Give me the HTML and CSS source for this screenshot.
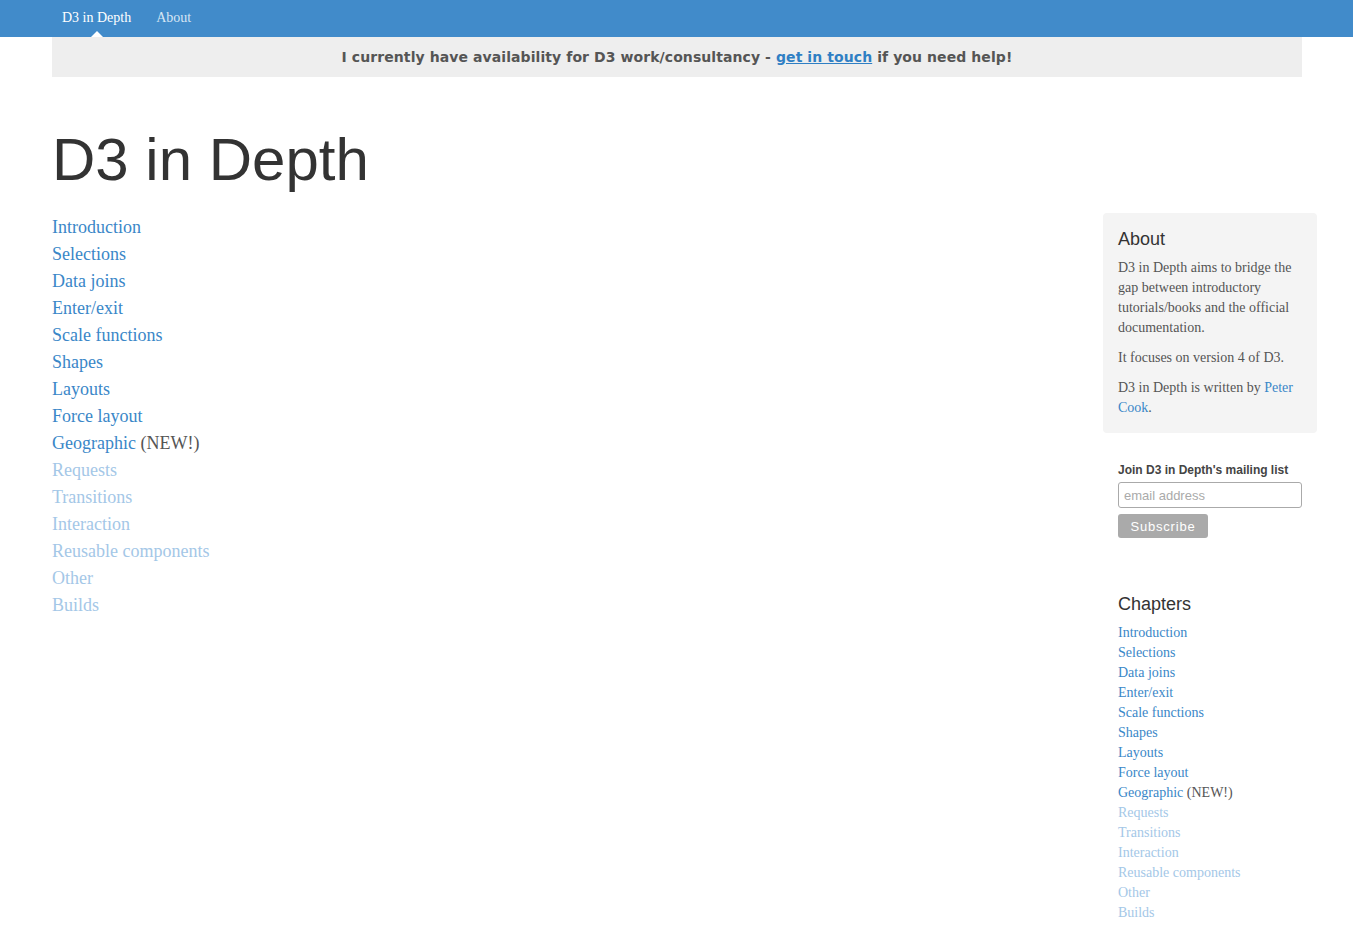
FILE: index.html
```html
<!DOCTYPE html>
<html>
<head>
<meta charset="utf-8">
<title>D3 in Depth</title>
<link rel="stylesheet" href="styles.css">
</head>
<body>
<nav class="navbar">
  <a class="nav-link active" href="#">D3 in Depth</a>
  <a class="nav-link" href="#">About</a>
</nav>
<div class="banner-wrap">
  <div class="banner">I currently have availability for D3 work/consultancy - <a href="#">get in touch</a> if you need help!</div>
</div>
<h1 class="title">D3 in Depth</h1>
<div class="layout">
  <main class="main">
    <ul class="toc">
      <li><a href="#">Introduction</a></li>
      <li><a href="#">Selections</a></li>
      <li><a href="#">Data joins</a></li>
      <li><a href="#">Enter/exit</a></li>
      <li><a href="#">Scale functions</a></li>
      <li><a href="#">Shapes</a></li>
      <li><a href="#">Layouts</a></li>
      <li><a href="#">Force layout</a></li>
      <li><a href="#">Geographic</a> <span class="new">(NEW!)</span></li>
      <li class="off">Requests</li>
      <li class="off">Transitions</li>
      <li class="off">Interaction</li>
      <li class="off">Reusable components</li>
      <li class="off">Other</li>
      <li class="off">Builds</li>
    </ul>
  </main>
  <aside class="sidebar">
    <div class="about">
      <h3 class="side-h">About</h3>
      <p>D3 in Depth aims to bridge the gap between introductory tutorials/books and the official documentation.</p>
      <p>It focuses on version 4 of D3.</p>
      <p>D3 in Depth is written by <a href="#">Peter Cook</a>.</p>
    </div>
    <form class="mail">
      <label class="mail-label">Join D3 in Depth's mailing list</label>
      <input class="mail-input" type="text" placeholder="email address">
      <button class="mail-btn" type="button">Subscribe</button>
    </form>
    <div class="chapters">
      <h3 class="side-h">Chapters</h3>
      <ul class="ch-list">
        <li><a href="#">Introduction</a></li>
        <li><a href="#">Selections</a></li>
        <li><a href="#">Data joins</a></li>
        <li><a href="#">Enter/exit</a></li>
        <li><a href="#">Scale functions</a></li>
        <li><a href="#">Shapes</a></li>
        <li><a href="#">Layouts</a></li>
        <li><a href="#">Force layout</a></li>
        <li><a href="#">Geographic</a> <span class="new">(NEW!)</span></li>
        <li class="off">Requests</li>
        <li class="off">Transitions</li>
        <li class="off">Interaction</li>
        <li class="off">Reusable components</li>
        <li class="off">Other</li>
        <li class="off">Builds</li>
      </ul>
    </div>
  </aside>
</div>
</body>
</html>
```
FILE: styles.css
```css
* { box-sizing: border-box; }
body {
  margin: 0;
  font-family: "Liberation Serif", "Times New Roman", serif;
  color: #555;
  background: #fff;
}
a { color: #3a87c8; text-decoration: none; }

.navbar {
  height: 37px;
  background: #418bca;
  display: flex;
  align-items: flex-start;
  padding-left: 62px;
  gap: 25px;
}
.nav-link {
  color: #d6e6f4;
  font-size: 14px;
  position: relative;
  line-height: 35px;
}
.nav-link.active { color: #fff; }
.nav-link.active::after {
  content: "";
  position: absolute;
  left: 50%;
  bottom: -2px;
  margin-left: -6px;
  border-left: 6px solid transparent;
  border-right: 6px solid transparent;
  border-bottom: 6px solid #fff;
}

.banner-wrap { padding: 0 51px 0 52px; }
.banner {
  background: #eee;
  height: 40px;
  line-height: 40px;
  text-align: center;
  font-family: "DejaVu Sans", sans-serif;
  font-weight: bold;
  font-size: 14px;
  letter-spacing: 0.08px;
  color: #555;
}
.banner a { color: #2f7fc4; text-decoration: underline; }

.title {
  margin: 47px 0 0 52px;
  font-family: "Liberation Sans", Arial, sans-serif;
  font-weight: normal;
  font-size: 60px;
  line-height: 72px;
  color: #333;
}

.layout {
  display: flex;
  align-items: flex-start;
  margin-top: 18px;
}
.main { flex: 1; padding-left: 52px; }
.toc {
  list-style: none;
  margin: 0;
  padding: 0;
  font-size: 18px;
  line-height: 27px;
}
.off { color: #a4c7e7; }
.new { color: #555; }

.sidebar {
  width: 214px;
  margin-right: 36px;
  margin-top: -1px;
}
.about {
  background: #f4f4f4;
  border-radius: 4px;
  padding: 15px 15px 5px;
}
.side-h {
  margin: 0 0 8px;
  font-family: "Liberation Sans", Arial, sans-serif;
  font-weight: normal;
  font-size: 18px;
  line-height: 22px;
  color: #333;
}
.about p {
  margin: 0 0 10px;
  font-size: 14px;
  line-height: 20px;
}

.mail {
  padding: 30px 15px 0;
  display: flex;
  flex-direction: column;
  align-items: flex-start;
}
.mail-label {
  font-family: "Liberation Sans", Arial, sans-serif;
  font-weight: bold;
  font-size: 12px;
  line-height: 14px;
  color: #444;
  margin-bottom: 5px;
}
.mail-input {
  width: 184px;
  height: 26px;
  border: 1px solid #aaa;
  border-radius: 3px;
  padding: 0 5px;
  font-family: "Liberation Sans", Arial, sans-serif;
  font-size: 13px;
  background: #fff;
}
.mail-input::placeholder { color: #aaa; }
.mail-btn {
  margin-top: 6px;
  width: 90px;
  height: 24px;
  border: none;
  border-radius: 3px;
  background: #aaa;
  color: #fff;
  font-family: "Liberation Sans", Arial, sans-serif;
  font-size: 13px;
  letter-spacing: 0.8px;
  padding: 0;
}

.chapters { padding: 55px 15px 0; }
.ch-list {
  list-style: none;
  margin: 0;
  padding: 0;
  font-size: 14px;
  line-height: 20px;
}
```
